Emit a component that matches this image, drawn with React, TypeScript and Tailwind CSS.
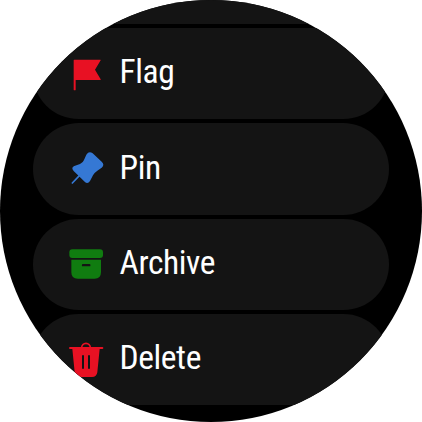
import type { ReactNode } from "react";

interface Action {
  label: string;
  icon: ReactNode;
}

const iconClass = "h-9 w-9 shrink-0";

function FlagIcon() {
  return (
    <svg viewBox="0 0 108 108" className={iconClass} fill="#e81123">
      <path d="M17 13Q17 11 19 11H97Q99 11 98 13L81 41L98 70Q99 72 97 72H23V101Q23 103 20 103T17 101Z" />
    </svg>
  );
}

function PinIcon() {
  return (
    <svg viewBox="0 0 108 108" className={iconClass} fill="#3578d4">
      <path d="M55 11Q63 -1 74 7L101 32Q111 41 101 50L88 59Q79 65 75 73L66 90Q59 101 50 92L17 60Q8 50 19 45L36 39Q45 35 48 27Z" />
      <path d="M37 71L13 96" stroke="#3578d4" strokeWidth="5" strokeLinecap="round" />
    </svg>
  );
}

function ArchiveIcon() {
  return (
    <svg viewBox="0 0 108 108" className={iconClass} fill="#107c10">
      <rect x="4" y="10" width="101" height="26" rx="9" />
      <path
        fillRule="evenodd"
        d="M10 41H99V79Q99 98 80 98H29Q10 98 10 79ZM45 54a3.5 3.5 0 0 0 0 7H64a3.5 3.5 0 0 0 0-7Z"
      />
    </svg>
  );
}

function DeleteIcon() {
  return (
    <svg viewBox="0 0 108 108" className={iconClass} fill="#e81123">
      <path d="M41 17a13 13 0 0 1 26 0" fill="none" stroke="#e81123" strokeWidth="5" />
      <path
        fillRule="evenodd"
        d="M6 15H103a3 3 0 0 1 0 6H95L88 91Q86 105 72 105H36Q22 105 20 91L13 21H6a3 3 0 0 1 0-6ZM42 42V78a3 3 0 0 0 6 0V42a3 3 0 0 0-6 0ZM60 42V78a3 3 0 0 0 6 0V42a3 3 0 0 0-6 0Z"
      />
    </svg>
  );
}

const actions: Action[] = [
  { label: "Flag", icon: <FlagIcon /> },
  { label: "Pin", icon: <PinIcon /> },
  { label: "Archive", icon: <ArchiveIcon /> },
  { label: "Delete", icon: <DeleteIcon /> },
];

function ActionChip({ label, icon }: Action) {
  return (
    <button
      type="button"
      className="flex h-[91.3px] w-full shrink-0 items-center gap-[15.5px] rounded-full bg-[#141414] pl-[35px] text-left"
    >
      {icon}
      <span className="-mt-[3px] text-[33.5px] leading-none tracking-[-0.4px] text-white">{label}</span>
    </button>
  );
}

export default function App() {
  return (
    <div className="h-[422px] w-[422px] bg-white">
      <div className="flex h-full w-full flex-col items-center overflow-hidden rounded-full bg-black font-['Roboto_Condensed','Roboto',sans-serif] [font-stretch:75%]">
        <div className="h-6 w-[356px] shrink-0 bg-[#141414]" />
        <div className="mt-1 flex w-[356px] flex-col gap-1">
          {actions.map((action) => (
            <ActionChip key={action.label} {...action} />
          ))}
        </div>
      </div>
    </div>
  );
}
